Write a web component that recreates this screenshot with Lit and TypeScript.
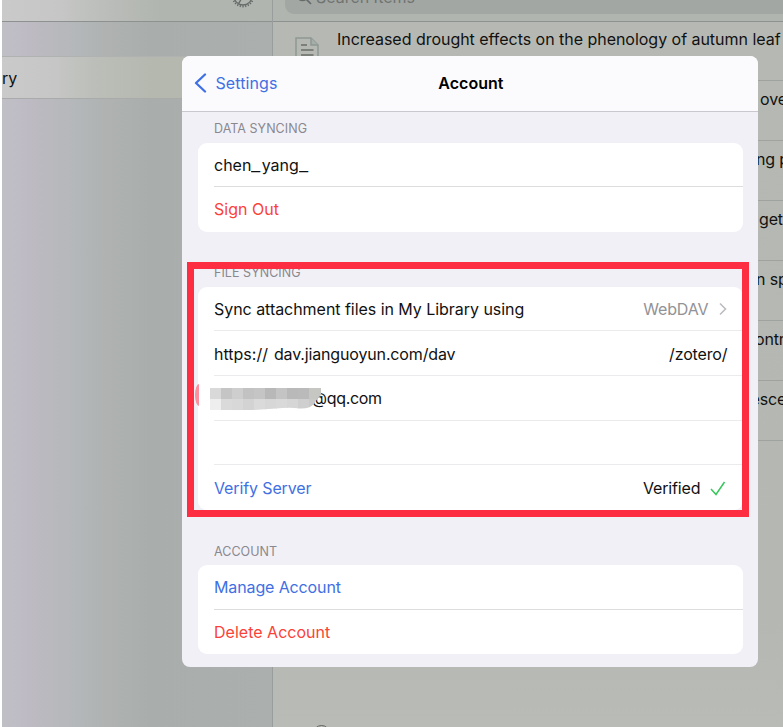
import { LitElement, html, css, svg } from "lit";
import { customElement, property } from "lit/decorators.js";

@customElement("settings-row")
class SettingsRow extends LitElement {
  @property() tone = "plain";
  static styles = css`
    :host { display: flex; align-items: center; height: 44.67px; box-sizing: border-box; margin-left: 16px; padding: 1px 15.5px 0 0;
      border-bottom: 1px solid var(--line, #ebebed); white-space: pre; }
    :host(:last-child) { border-bottom: 0; }
    :host([tone="link"]) { color: #3f70e4; letter-spacing: -0.12px; }
    :host([tone="danger"]) { color: #fb4238; letter-spacing: 0.02px; padding: 0 15.5px 1px 0; }
  `;
  render() { return html`<slot></slot>`; }
}

@customElement("app-root")
class AppRoot extends LitElement {
  static styles = css`
    :host { display: block; position: relative; width: 783px; height: 727px; overflow: hidden; background: #fff;
      font-family: Inter, "Liberation Sans", sans-serif; font-size: 16px; letter-spacing: -0.15px; color: #111; }
    .app { display: grid; grid-template-columns: 271px 510px; height: 727px; margin-left: 2px; }
    .side { display: flex; flex-direction: column; border-right: 1px solid #999e9c; box-sizing: border-box;
      background: linear-gradient(90deg, #bfbfc6 0, #bebac3 28px, #b9b9be 48px, #b4b7b9 75px, #afb2b1 105px, #a9aeac 148px, #abafae 100%); }
    .top { height: 22px; box-sizing: border-box; border-bottom: 1px solid #8d9291; overflow: hidden; flex: none; }
    .side .top { background: linear-gradient(90deg, #cacaca 0, #c5c6c5 60px, #b9bcb8 110px, #b1b5af 160px, #b0b5b0 100%); display: flex; justify-content: flex-end; padding-right: 17px; }
    .gear { margin-top: -16px; flex: none; }
    .gap { height: 34px; flex: none; }
    .library { height: 43px; box-sizing: border-box; border-top: 1px solid #b0b2b1; border-bottom: 1px solid #a9abab;
      background: linear-gradient(90deg, #cacaca 0, #c5c6c5 55px, #bcbfb9 90px, #b5b8af 150px); display: flex; align-items: center; letter-spacing: 0.1px; }
    .items { background: linear-gradient(#b6b9b3, #b5b8b2 85%, #b8bbb6); display: flex; flex-direction: column; position: relative; overflow: hidden; }
    .items .top { background: #b0b5b0; padding-left: 12px; }
    .search { height: 32px; margin-top: -18px; width: 520px; box-sizing: border-box; border-radius: 9px; background: #a3a7a3; color: #6f7472; display: flex; align-items: center; padding-left: 11px; padding-bottom: 3px; }
    .search span { margin-left: 4px; letter-spacing: 0; }
    .item { height: 60px; flex: none; box-sizing: border-box; border-bottom: 1px solid #9fa39f; margin-left: 64px; padding-top: 8px; white-space: nowrap; line-height: 20px; }
    .item.first { height: 59px; margin-left: 0; padding-top: 7px; display: flex; letter-spacing: -0.03px; }
    .item.first svg { margin: 8px 18px 0 22px; flex: none; }
    .more { position: absolute; left: 40px; top: 724.5px; width: 17px; height: 17px; box-sizing: border-box; border: 1.5px solid #5f635f; border-radius: 50%; }
    .modal { position: absolute; left: 182.4px; top: 55.5px; width: 576px; height: 611.5px; box-sizing: border-box; border-radius: 8px; overflow: hidden; background: #f2f0f7; }
    .head { height: 56px; box-sizing: border-box; border-bottom: 1px solid #c9c8ce; background: #fbfbfe; display: grid; grid-template-columns: 1fr auto 1fr; align-items: center; }
    .back { color: #3f70e4; display: flex; align-items: center; padding-left: 12px; gap: 7px; letter-spacing: 0.1px; }
    .title { font-weight: 600; color: #000; letter-spacing: 0.05px; padding-left: 1px; }
    .group { padding: 0 15.5px 0 15.6px; }
    .label { font-size: 12.5px; color: #89888e; letter-spacing: 0.05px; height: 31px; line-height: 33px; padding-left: 16px; }
    .group + .group .label { height: 55px; line-height: 82px; }
    .group:last-child .label { line-height: 84px; }
    .card { background: #fff; border-radius: 9px; overflow: hidden; }
    .strong { --line: #dddddf; }
    .user { letter-spacing: 0; }
    .bar { display: inline-block; transform: scaleX(1.27); transform-origin: left; margin-right: 3px; }
    .choice { letter-spacing: -0.04px; }
    .scheme { letter-spacing: 0; margin-right: 6px; }
    .host-name { letter-spacing: -0.15px; }
    .push { margin-left: auto; }
    .muted { color: #929297; }
    .status { color: #111; letter-spacing: -0.15px; }
    .chev { margin-left: 11px; }
    .check { margin: 0 1px 0 10px; }
    .hidden-name { display: block; margin: 2px 0 0 -4px; flex: none; position: relative; z-index: 1; }
    .mail { margin-left: -9.5px; letter-spacing: -0.3px; }
    .frame { position: absolute; left: 187px; top: 261.5px; width: 561.5px; height: 255.5px; box-sizing: border-box; border: 7px solid #fe2e42; }
    .dot { position: absolute; left: 194.5px; top: 384px; width: 4px; height: 22px; border-radius: 4px 0 0 4px / 11px 0 0 11px; background: #fb8f9d; }
  `;

  private gear() {
    const teeth = Array.from({ length: 24 }, (_, i) => svg`<path d="M12 0.600v2" transform=${`rotate(${i * 15} 12 12)`}/>`);
    return html`<svg class="gear" width="24" height="24" viewBox="0 0 24 24" fill="none" stroke="#666b69" stroke-width="1.3">
      <circle cx="12" cy="12" r="9"/>${teeth}<path d="M12 12L7.600 19.600M12 12h8.500M12 12L7.600 4.400"/></svg>`;
  }

  private mosaic() {
    const top = ["#d9d9d9", "#c5c5c5", "#cecece", "#c2c2c2", "#c5c5c5", "#b8b8b8", "#c4c4c4", "#b9b9b9", "#bababa", "#c6c6c3"];
    const bottom = ["#eeeeee", "#dadada", "#d8d8d8", "#d3d3d3", "#dadada", "#d7d7d7", "#d9d9d9", "#d6d6d6", "#cfcfcf", "#c9c9c7"];
    return html`<svg class="hidden-name" width="111" height="24" viewBox="0 0 111 24">
      <clipPath id="brush"><path d="M0 1H111V8Q106 13 104 17Q99 22 90 21.500Q80 20 66 21.500L43 23H0Z"/></clipPath>
      <g clip-path="url(#brush)">
        ${top.map((c, i) => svg`<rect x=${i * 11} y="1" width="12" height="11.500" fill=${c}/>`)}
        ${bottom.map((c, i) => svg`<rect x=${i * 11} y="12" width="12" height="11.500" fill=${c}/>`)}
      </g></svg>`;
  }

  private row(text: string, indent: number) {
    return html`<div class="item"><span style="margin-left:${indent - 337}px">${text}</span></div>`;
  }

  render() {
    return html`
      <div class="app">
        <div class="side">
          <div class="top">${this.gear()}</div>
          <div class="gap"></div>
          <div class="library">ry</div>
        </div>
        <div class="items">
          <div class="top"><div class="search">
            <svg width="16" height="16" viewBox="0 0 16 16" fill="none" stroke="#666b69" stroke-width="1.7"><circle cx="6.5" cy="6.5" r="5"/><path d="M10.2 10.2L15 15"/></svg>
            <span>Search Items</span></div></div>
          <div class="item first">
            <svg width="24" height="29" viewBox="0 0 24 29" fill="none" stroke="#8f9894" stroke-width="1.5"><path d="M1 28V1H16L23 8V28Z"/><path d="M16 1V8H23" fill="#a6aeaa"/><path d="M6 8H12M6 13H18.500M6 18H18.500M6 23H18.500" stroke="#686d69" stroke-width="1.6"/></svg>
            <span>Increased drought effects on the phenology of autumn leaf</span>
          </div>
          ${this.row("over", 760)}${this.row("ng p", 756)}${this.row("get", 759)}
          ${this.row("n sp", 756)}${this.row("ontr", 755)}${this.row("esce", 750.5)}
          <div class="more"></div>
        </div>
      </div>

      <div class="modal">
        <div class="head">
          <div class="back"><svg width="14" height="20" viewBox="0 0 14 20" fill="none" stroke="#3f70e4" stroke-width="2.300" stroke-linecap="round" stroke-linejoin="round"><path d="M11 1.500L2 10L11 18.500"/></svg><span>Settings</span></div>
          <div class="title">Account</div><div></div>
        </div>
        <div class="group">
          <div class="label">DATA SYNCING</div>
          <div class="card strong">
            <settings-row><span class="user">chen<span class="bar">_</span>yang<span class="bar">_</span></span></settings-row>
            <settings-row tone="danger">Sign Out</settings-row>
          </div>
        </div>
        <div class="group">
          <div class="label">FILE SYNCING</div>
          <div class="card">
            <settings-row><span class="choice">Sync attachment files in My Library using</span><span class="push muted">WebDAV</span>
              <svg class="chev" width="8" height="14" viewBox="0 0 8 14" fill="none" stroke="#bcbcc1" stroke-width="1.6"><path d="M1 1.500L6.500 7L1 12.500"/></svg></settings-row>
            <settings-row><span class="scheme">https://</span><span class="host-name">dav.jianguoyun.com/dav</span><span class="push">/zotero/</span></settings-row>
            <settings-row>${this.mosaic()}<span class="mail">@qq.com</span></settings-row>
            <settings-row></settings-row>
            <settings-row tone="link"><span>Verify Server</span><span class="push status">Verified</span>
              <svg class="check" width="16" height="15" viewBox="0 0 16 15" fill="none" stroke="#37c75a" stroke-width="1.5"><path d="M1 8L6 13.500L14.500 1"/></svg></settings-row>
          </div>
        </div>
        <div class="group">
          <div class="label">ACCOUNT</div>
          <div class="card strong">
            <settings-row tone="link">Manage Account</settings-row>
            <settings-row tone="danger">Delete Account</settings-row>
          </div>
        </div>
      </div>
      <div class="dot"></div>
      <div class="frame"></div>
    `;
  }
}
